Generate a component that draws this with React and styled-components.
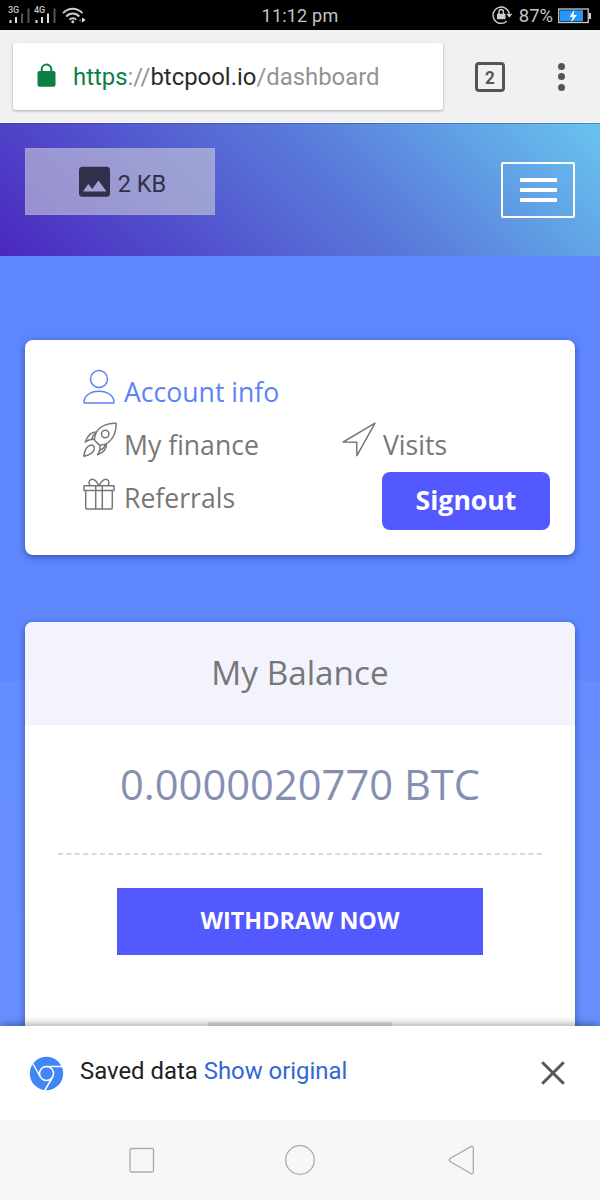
import React from "react";
import styled, { createGlobalStyle } from "styled-components";

const GlobalStyle = createGlobalStyle`
  * { box-sizing: border-box; }
  body { margin: 0; background: #f7f7f7; }
  svg { display: block; flex: none; }
  button { border: 0; padding: 0; background: none; font: inherit; color: inherit; }
`;

const Screen = styled.div`
  width: 600px;
  height: 1200px;
  display: flex;
  flex-direction: column;
  overflow: hidden;
  font-family: Roboto, "Liberation Sans", sans-serif;
`;

const StatusBar = styled.header`
  height: 30px;
  flex: none;
  display: grid;
  grid-template-columns: 1fr auto 1fr;
  align-items: center;
  padding: 0 8px;
  background: #000;
  color: #c4c4c4;
  font-size: 18px;
  line-height: 30px;
`;

const StatusGroup = styled.div`
  display: flex;
  align-items: center;
  height: 30px;
  justify-content: ${(p) => (p.$end ? "flex-end" : "flex-start")};
`;

const Signal = styled.div`
  width: 26px;
  height: 17px;
  display: flex;
  flex-direction: column;
  position: relative;
`;

const SignalLabel = styled.span`
  position: absolute;
  left: 0;
  top: -1px;
  font-size: 9px;
  font-weight: 500;
  line-height: 9px;
`;

const Clock = styled.span`
  padding-top: 1px;
  letter-spacing: 0.2px;
`;

const Percent = styled.span`
  margin: 0 5px 0 6px;
  font-size: 18.4px;
`;

const Toolbar = styled.div`
  height: 93px;
  flex: none;
  display: flex;
  align-items: center;
  padding: 1px 26px 0 13px;
  background: #f1f1f1;
  border-bottom: 1px solid #fff;
`;

const AddressBar = styled.div`
  width: 430px;
  height: 67px;
  display: flex;
  align-items: center;
  padding-left: 24px;
  background: #fff;
  border-radius: 3px;
  box-shadow: 0 1px 3px rgba(0, 0, 0, 0.3);
`;

const Url = styled.span`
  margin-left: 17px;
  padding-top: 1px;
  font-size: 23.9px;
  line-height: 30px;
  color: #939393;
`;

const Secure = styled.span`
  color: #0b8043;
`;

const Host = styled.span`
  color: #2b2b2b;
`;

const TabCount = styled.button`
  width: 30px;
  height: 30px;
  margin-left: 32px;
  border: 3px solid #555;
  border-radius: 4px;
  color: #555;
  font-size: 19px;
  font-weight: 700;
  line-height: 25px;
`;

const TabDigit = styled.span`
  display: block;
  transform: scaleX(0.9);
`;

const Overflow = styled.button`
  margin-left: auto;
  width: 25px;
  height: 30px;
  display: flex;
  flex-direction: column;
  align-items: center;
  justify-content: space-between;
  padding: 1px 0;
`;

const Dot = styled.span`
  width: 7px;
  height: 7px;
  border-radius: 50%;
  background: #555;
`;

const SiteHeader = styled.div`
  height: 133px;
  flex: none;
  display: flex;
  align-items: flex-start;
  justify-content: space-between;
  padding: 24px 25px 0;
  border-top: 1px solid rgba(50, 50, 110, 0.4);
  background: linear-gradient(45deg, #4a27bf 0%, #5a7fdc 60%, #68c4ef 100%) border-box;
`;

const Placeholder = styled.div`
  width: 190px;
  height: 67px;
  display: flex;
  align-items: center;
  justify-content: center;
  gap: 8px;
  padding-left: 5px;
  border: 1px solid rgba(190, 185, 230, 0.2);
  background: rgba(208, 210, 216, 0.58);
  color: #30304a;
  font-size: 23.5px;
  line-height: 30px;
`;

const PlaceholderSize = styled.span`
  padding-top: 4px;
`;

const MenuButton = styled.button`
  width: 74px;
  height: 56px;
  margin-top: 14px;
  display: flex;
  flex-direction: column;
  align-items: center;
  justify-content: center;
  gap: 6px;
  border: 2px solid #fff;
  border-radius: 2px;
`;

const MenuLine = styled.span`
  width: 37px;
  height: 4px;
  background: #fff;
`;

const Main = styled.main`
  flex: 1;
  min-height: 0;
  overflow: hidden;
  padding: 84px 25px 0;
  background: radial-gradient(circle 3000px at 50% 3411px, #678fff 2720px, #648dff 2999px, #5e87fe 3000px);
  font-family: "Open Sans", "Noto Sans", sans-serif;
`;

const Card = styled.section`
  background: #fff;
  border-radius: 8px;
  box-shadow: 0 2px 7px rgba(20, 30, 90, 0.5);
  overflow: hidden;
`;

const AccountCard = styled(Card)`
  height: 215px;
  padding: 25px 25px 25px 58px;
  display: grid;
  grid-template-columns: 259px 1fr;
  grid-template-rows: 53px 53px 58px;
`;

const NavLink = styled.a`
  display: flex;
  align-items: flex-start;
  gap: 7px;
  grid-column: ${(p) => p.$column || 1};
  padding-top: 4px;
  color: ${(p) => (p.$active ? "#5c83f5" : "#777")};
  font-size: 26.6px;
  line-height: 36px;
  white-space: nowrap;
`;

const NavLabel = styled.span`
  margin-top: 5px;
`;

const Signout = styled.button`
  grid-column: 2;
  grid-row: 3;
  justify-self: end;
  width: 168px;
  height: 58px;
  margin-top: 1px;
  border-radius: 8px;
  background: #5459ff;
  color: #fff;
  font-size: 26.6px;
  font-weight: 700;
  line-height: 56px;
  padding-bottom: 2px;
`;

const BalanceCard = styled(Card)`
  margin-top: 67px;
  height: 440px;
  display: flex;
  flex-direction: column;
`;

const CardTitle = styled.h2`
  margin: 0;
  height: 103px;
  background: #f2f3fd;
  color: #777;
  font-size: 33.3px;
  font-weight: 400;
  line-height: 101px;
  text-align: center;
`;

const CardBody = styled.div`
  display: flex;
  flex-direction: column;
  align-items: center;
  padding: 29px 33px 0;
`;

const Amount = styled.div`
  height: 60px;
  color: #868fb1;
  font-size: 41.7px;
  line-height: 60px;
  white-space: nowrap;
`;

const DashedRule = styled.svg`
  width: 484px;
  height: 2px;
  margin-top: 39px;
`;

const Withdraw = styled.button`
  width: 366px;
  height: 67px;
  margin-top: 33px;
  background: #5459ff;
  color: #fff;
  font-size: 23.3px;
  font-weight: 700;
  line-height: 64px;
  padding-bottom: 3px;
`;

const Handle = styled.div`
  width: 184px;
  height: 10px;
  margin-top: 67px;
  background: #e4e4e4;
`;

const InfoBar = styled.div`
  height: 94px;
  flex: none;
  position: relative;
  display: flex;
  align-items: center;
  padding: 0 35px 0 29px;
  background: #fff;
  box-shadow: 0 -1px 9px rgba(0, 0, 0, 0.4);
  color: #212121;
  font-size: 23.9px;
  line-height: 30px;
`;

const InfoText = styled.p`
  margin: -4px auto 0 16px;
`;

const InfoLink = styled.a`
  color: #3367d6;
`;

const SystemNav = styled.nav`
  height: 80px;
  flex: none;
  position: relative;
  display: flex;
  align-items: center;
  justify-content: center;
  gap: 128px;
  background: #f7f7f7;
`;

const SignalBars = ({ label, lit }) => (
  <Signal>
    <SignalLabel>{label}</SignalLabel>
    <svg width="24" height="17" viewBox="0 0 24 17">
      <path d="M1.5 13h2v3h-2zM7 10h2v6H7z" fill="#ddd" />
      <path d="M13 6.5h2V16h-2z" fill={lit ? "#ddd" : "#555"} />
      <path d="M19.5 1.500h2V16h-2z" fill="#555" />
    </svg>
  </Signal>
);

const WifiIcon = () => (
  <svg width="26" height="17" viewBox="0 0 26 17" fill="none" stroke="#ccc" strokeWidth="1.9">
    <g transform="translate(2 0)">
      <path d="M1 6.200C6.500 .3 15 .3 20.500 6.200M4.200 9.500c3.800-4 9.300-4 13.100 0M7.400 12.700c2-2 4.800-2 6.800 0" />
      <circle cx="10.800" cy="14.800" r="1.500" fill="#ccc" stroke="none" />
      <path d="M19 11.500v4l-2.500-2z" fill="#555" stroke="none" />
      <path d="M20 10.500v5l3.500-2.500z" fill="#eee" stroke="none" />
    </g>
  </svg>
);

const RotationLockIcon = () => (
  <svg width="21" height="19" viewBox="0 0 21 19" fill="none" stroke="#ccc" strokeWidth="1.400">
    <path d="M14.800 15.200A8.200 8.200 0 1 1 17.300 7.700" />
    <path d="M14.300 7.700h6l-3 4z" fill="#ccc" stroke="none" />
    <path d="M5 7.700h8.500v5.500H5z" fill="#ccc" stroke="none" />
    <path d="M7 8.200V5.700a2.200 2.200 0 0 1 4.400 0v2.500" />
  </svg>
);

const BatteryIcon = () => (
  <svg width="34" height="16" viewBox="0 0 34 16">
    <rect x=".75" y="1" width="29.500" height="13.500" fill="none" stroke="#ccc" strokeWidth="1.300" />
    <path d="M31 5h2v6h-2z" fill="#ccc" />
    <path d="M2 2.300h23v11H2z" fill="#2697f7" />
    <path d="M16.500 1.500 11.500 9h3.200L13 14.500 19 7h-3.500z" fill="#fff" />
  </svg>
);

const LockIcon = () => (
  <svg width="19" height="28" viewBox="0 0 19 28">
    <path d="M4.700 9V6.300a4.800 4.800 0 0 1 9.600 0V9" fill="none" stroke="#0b8043" strokeWidth="2" />
    <rect x=".5" y="8" width="18" height="15.700" rx="2" fill="#0b8043" />
  </svg>
);

const PictureIcon = () => (
  <svg width="31" height="31" viewBox="0 0 31 31">
    <rect y=".7" width="31" height="30" rx="3.500" fill="#30304a" />
    <path d="M4 25.500 9.300 18l4 5 6.200-8.500 8 11z" fill="#a3a0d4" />
  </svg>
);

const UserIcon = () => (
  <svg width="34" height="36" viewBox="0 0 34 36" fill="none" stroke="currentColor" strokeWidth="1.500">
    <circle cx="16" cy="10" r="8.500" />
    <path d="M1.200 34C.2 27 7.500 22.200 16 22.200S31.800 27 30.800 34z" strokeLinejoin="round" />
  </svg>
);

const RocketIcon = () => (
  <svg width="34" height="36" viewBox="0 0 34 36" fill="none" stroke="currentColor" strokeWidth="1.500" strokeLinejoin="round">
    <path d="M33 1.200C25 .8 16.500 4.500 13.500 10c-1.800 3.500-2.200 6-1.800 8.500l4.800 4.600c3.500.2 6.200-.5 8.800-2.600C30.500 16 33.500 9 33 1.200z" />
    <circle cx="22.200" cy="12" r="3.700" />
    <path d="M13.400 10C8.300 9.800 4.500 14 2.200 20c3-2.300 6-3 9.600-2.600M12.700 11.200c-2.300 1.600-3.700 3.500-4.300 6.300" />
    <path d="M23.500 22c.2 4.200-2.500 8-8.800 10.700 2.200-3.300 2.700-6 2.200-9.500M22 22.800c-.4 2.400-1.500 4-4.800 5.200" />
    <path d="M.8 34.200C1.500 29 4 24 7.500 23.200c2.700-.5 4.500 1.700 3.700 4.200C10 30.700 5.500 33.300.8 34.200z" />
  </svg>
);

const GiftIcon = () => (
  <svg width="34" height="36" viewBox="0 0 34 36" fill="none" stroke="currentColor" strokeWidth="1.500" strokeLinejoin="round">
    <g transform="translate(0 1)">
      <path d="M1 9.800h30v4.800H1zM2.700 14.600h26.600v17q0 1.500-1.500 1.500H4.200q-1.500 0-1.500-1.500zM12.700 9.800v23.300M19.300 9.800v23.300" />
      <path d="M16 9.800C13.500 4.800 10.500 2.500 8 3.500 5.300 4.600 5.800 8.300 7.300 9.800M16 9.800c2.500-5 5.500-7.300 8-6.300 2.700 1.100 2.200 4.800.7 6.300" />
    </g>
  </svg>
);

const ArrowIcon = () => (
  <svg width="34" height="36" viewBox="0 0 34 36" fill="none" stroke="currentColor" strokeWidth="1.500" strokeLinejoin="round">
    <path d="M33 1.200 1.200 20l13.500.2.200 13.500z" />
  </svg>
);

const ChromeIcon = () => (
  <svg width="35" height="35" viewBox="0 0 35 35">
    <circle cx="17.500" cy="17.500" r="16.700" fill="#4285f4" />
    <g fill="none" stroke="#fff" strokeWidth="1.500">
      <circle cx="17.500" cy="17.500" r="7" />
      <path d="M17.500 10.500H33.500M11.300 21 3.800 7.500M23.700 21l-8 13.500" />
    </g>
  </svg>
);

const CloseIcon = () => (
  <svg width="24" height="24" viewBox="0 0 24 24" stroke="#585858" strokeWidth="3">
    <path d="M1.200 1.200 22.800 22.800M22.800 1.200 1.200 22.800" />
  </svg>
);

const NavIcon = ({ children }) => (
  <svg width="32" height="32" viewBox="0 0 32 32" fill="none" stroke="#aaa" strokeWidth="1.300" strokeLinejoin="round">
    {children}
  </svg>
);

export default function App() {
  return (
    <Screen>
      <GlobalStyle />
      <StatusBar>
        <StatusGroup>
          <SignalBars label="3G" />
          <SignalBars label="4G" lit />
          <WifiIcon />
        </StatusGroup>
        <Clock>11:12 pm</Clock>
        <StatusGroup $end>
          <RotationLockIcon />
          <Percent>87%</Percent>
          <BatteryIcon />
        </StatusGroup>
      </StatusBar>
      <Toolbar>
        <AddressBar>
          <LockIcon />
          <Url>
            <Secure>https</Secure>://<Host>btcpool.io</Host>/dashboard
          </Url>
        </AddressBar>
        <TabCount>
          <TabDigit>2</TabDigit>
        </TabCount>
        <Overflow aria-label="More options">
          <Dot />
          <Dot />
          <Dot />
        </Overflow>
      </Toolbar>
      <SiteHeader>
        <Placeholder>
          <PictureIcon />
          <PlaceholderSize>2 KB</PlaceholderSize>
        </Placeholder>
        <MenuButton aria-label="Menu">
          <MenuLine />
          <MenuLine />
          <MenuLine />
        </MenuButton>
      </SiteHeader>
      <Main>
        <AccountCard>
          <NavLink $active>
            <UserIcon />
            <NavLabel>Account info</NavLabel>
          </NavLink>
          <NavLink>
            <RocketIcon />
            <NavLabel>My finance</NavLabel>
          </NavLink>
          <NavLink $column={2}>
            <ArrowIcon />
            <NavLabel>Visits</NavLabel>
          </NavLink>
          <NavLink>
            <GiftIcon />
            <NavLabel>Referrals</NavLabel>
          </NavLink>
          <Signout>Signout</Signout>
        </AccountCard>
        <BalanceCard>
          <CardTitle>My Balance</CardTitle>
          <CardBody>
            <Amount>0.0000020770 BTC</Amount>
            <DashedRule viewBox="0 0 484 2">
              <path d="M0 1H484" stroke="#ccc" strokeWidth="1.500" strokeDasharray="5 3.400" />
            </DashedRule>
            <Withdraw>WITHDRAW NOW</Withdraw>
            <Handle />
          </CardBody>
        </BalanceCard>
      </Main>
      <InfoBar>
        <ChromeIcon />
        <InfoText>
          Saved data <InfoLink>Show original</InfoLink>
        </InfoText>
        <CloseIcon />
      </InfoBar>
      <SystemNav>
        <NavIcon>
          <rect x="6" y="4.500" width="23.500" height="23.500" rx="1.500" />
        </NavIcon>
        <NavIcon>
          <circle cx="16" cy="16" r="14.300" />
        </NavIcon>
        <NavIcon>
          <path
            transform="translate(4.500 0.300)"
            d="M22.300 2.300 2 14q-2.500 1.700 0 3.500l20.300 11.700q2.500.8 2.500-2V4.300q0-2.800-2.500-2z"
          />
        </NavIcon>
      </SystemNav>
    </Screen>
  );
}
